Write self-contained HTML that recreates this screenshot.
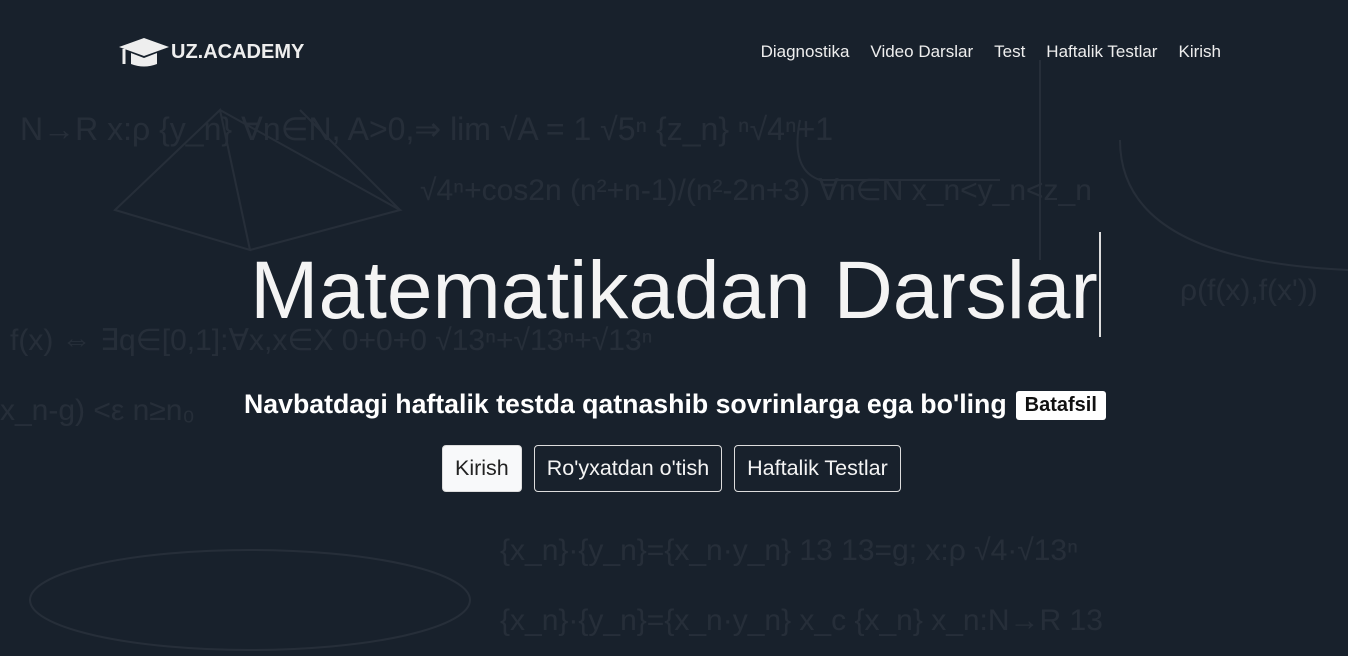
<!DOCTYPE html>
<html><head><style>
html,body{margin:0;width:1348px;height:656px;overflow:hidden}
body{background:#18212c;font-family:"Liberation Sans",sans-serif;color:#fff;position:relative}
.bg{position:absolute;left:0;top:0;opacity:.06}
.logo{position:absolute;left:119px;top:36px;display:flex;align-items:center;font-weight:bold;font-size:20px;color:#eee}
.nav{position:absolute;top:42px;right:127px;font-size:17px;color:#eee}
.nav span{margin-left:21px}
h1{position:absolute;left:0;right:0;top:244px;margin:0;text-align:center;font-weight:normal;font-size:82px;color:#f4f4f4}
.cur{position:absolute;left:1099px;top:232px;width:2px;height:105px;background:#ddd}
.sub{position:absolute;left:244px;top:389px;font-size:26.7px;font-weight:bold;white-space:nowrap}
.badge{display:inline-block;background:#fff;color:#111;font-size:20px;padding:3px 9px;border-radius:3px;vertical-align:2px;margin-left:9px}
.btns{position:absolute;left:442px;top:445px;display:flex;gap:12px}
.btn{border:1px solid #ddd;border-radius:4px;height:47px;box-sizing:border-box;padding:0 12px;line-height:45px;font-size:21.5px;color:#f4f4f4}
.btn.w{background:#f8f9fa;color:#222}
</style></head><body>
<svg class="bg" width="1348" height="656" stroke="#fff" fill="none" stroke-width="2">
<path d="M115 210 L220 110 L250 250 Z M220 110 L400 210 L250 250 M300 110 L400 210"/>
<ellipse cx="250" cy="600" rx="220" ry="50"/>
<path d="M800 120 Q790 170 820 180 L1000 180 M1040 60 L1040 260 M1120 140 Q1120 260 1348 270"/>
<text x="20" y="140" font-size="32" fill="#fff" stroke="none">N→R  x:ρ   {y_n}  ∀n∈N,  A&gt;0,⇒   lim √A = 1    √5ⁿ  {z_n}  ⁿ√4ⁿ+1</text>
<text x="420" y="200" font-size="30" fill="#fff" stroke="none">√4ⁿ+cos2n  (n²+n-1)/(n²-2n+3)   ∀n∈N x_n&lt;y_n&lt;z_n</text>
<text x="10" y="350" font-size="30" fill="#fff" stroke="none">f(x) ⇔ ∃q∈[0,1]:∀x,x∈X           0+0+0        √13ⁿ+√13ⁿ+√13ⁿ</text>
<text x="0" y="420" font-size="30" fill="#fff" stroke="none">x_n-g) &lt;ε n≥n₀</text>
<text x="500" y="560" font-size="30" fill="#fff" stroke="none">{x_n}·{y_n}={x_n·y_n} 13               13=g; x:ρ  √4·√13ⁿ</text>
<text x="500" y="630" font-size="30" fill="#fff" stroke="none">{x_n}·{y_n}={x_n·y_n}       x_c    {x_n}  x_n:N→R  13</text>
<text x="1180" y="300" font-size="30" fill="#fff" stroke="none">ρ(f(x),f(x'))</text>
</svg>
<div class="logo"><svg width="50" height="32" viewBox="0 0 50 32"><path d="M25 2 L50 11 L25 20 L0 11 Z" fill="#eee"/><path d="M12 17 L12 28 Q25 33 38 28 L38 17 L25 22 Z" fill="#eee"/><path d="M5 13 L5 28" stroke="#eee" stroke-width="3"/></svg><span style="margin-left:2px">UZ.ACADEMY</span></div>
<div class="nav"><span>Diagnostika</span><span>Video Darslar</span><span>Test</span><span>Haftalik Testlar</span><span>Kirish</span></div>
<h1>Matematikadan Darslar</h1><div class="cur"></div>
<div class="sub">Navbatdagi haftalik testda qatnashib sovrinlarga ega bo'ling<span class="badge">Batafsil</span></div>
<div class="btns"><div class="btn w">Kirish</div><div class="btn">Ro'yxatdan o'tish</div><div class="btn">Haftalik Testlar</div></div>
</body></html>
